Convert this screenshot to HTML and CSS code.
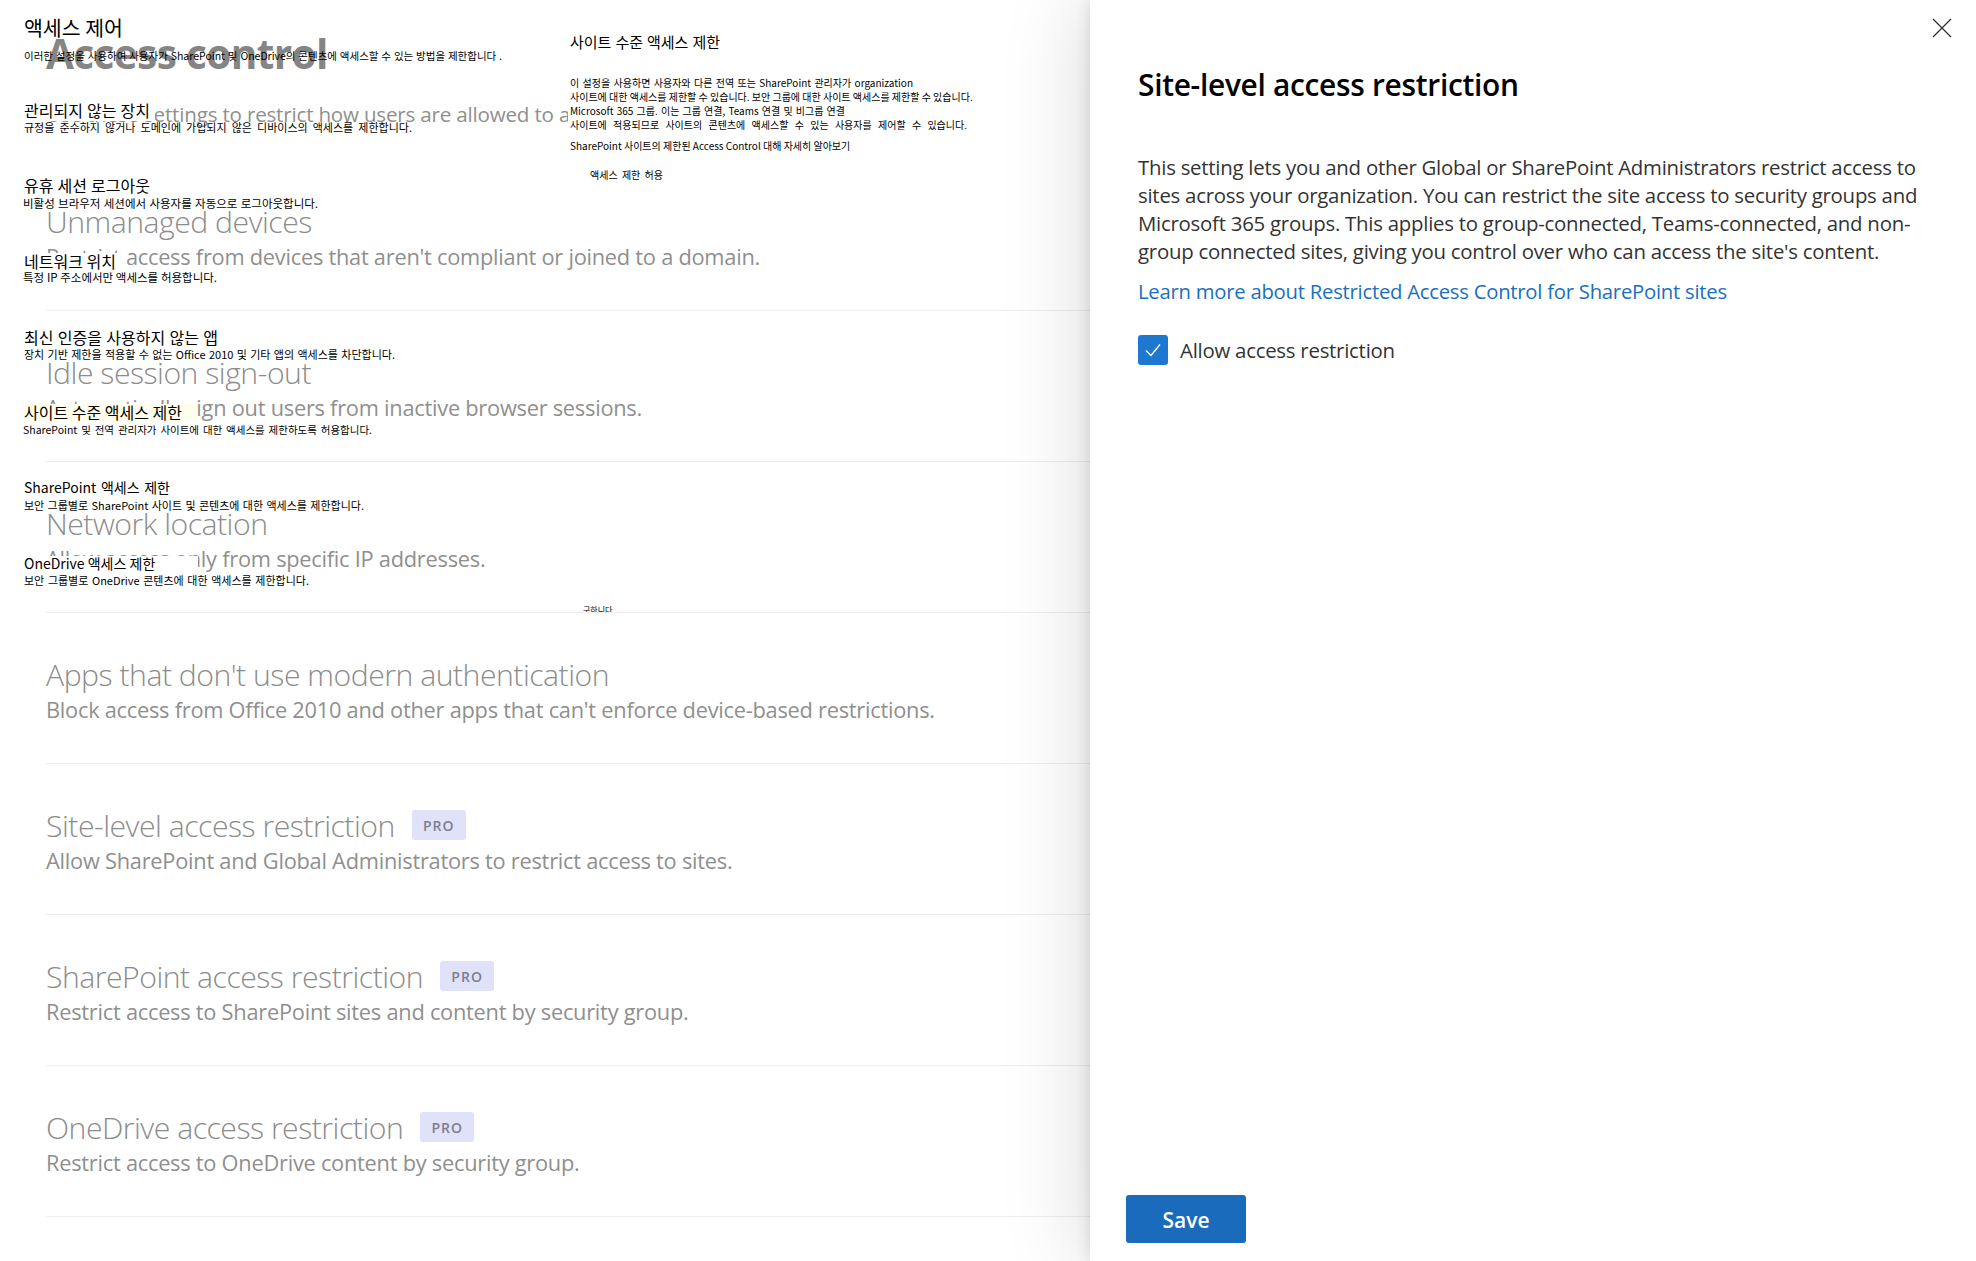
FILE: index.html
```html
<!DOCTYPE html>
<html lang="en">
<head>
<meta charset="utf-8">
<title>Access control</title>
<link rel="stylesheet" href="styles.css">
</head>
<body>
<div class="page">
  <main class="settings">
    <h1 class="page-title">Access control</h1>
    <p class="intro">Use these settings to restrict how users are allowed to access SharePoint and OneDrive content.</p>
    <section class="row">
      <h2 class="row-title">Unmanaged devices</h2>
      <p class="row-desc">Restrict access from devices that aren't compliant or joined to a domain.</p>
    </section>
    <section class="row">
      <h2 class="row-title">Idle session sign-out</h2>
      <p class="row-desc">Automatically sign out users from inactive browser sessions.</p>
    </section>
    <section class="row">
      <h2 class="row-title">Network location</h2>
      <p class="row-desc">Allow access only from specific IP addresses.</p>
    </section>
    <section class="row">
      <h2 class="row-title">Apps that don't use modern authentication</h2>
      <p class="row-desc">Block access from Office 2010 and other apps that can't enforce device-based restrictions.</p>
    </section>
    <section class="row">
      <h2 class="row-title">Site-level access restriction <span class="pro">PRO</span></h2>
      <p class="row-desc">Allow SharePoint and Global Administrators to restrict access to sites.</p>
    </section>
    <section class="row">
      <h2 class="row-title">SharePoint access restriction <span class="pro">PRO</span></h2>
      <p class="row-desc">Restrict access to SharePoint sites and content by security group.</p>
    </section>
    <section class="row">
      <h2 class="row-title">OneDrive access restriction <span class="pro">PRO</span></h2>
      <p class="row-desc">Restrict access to OneDrive content by security group.</p>
    </section>
  </main>

  <div class="ko-layer">
    <div class="patch patch-title"></div>
    <div class="patch patch-side"></div>
    <div class="ko h-main">액세스 제어</div>
    <div class="ko s-main">이러한 설정을 사용하여 사용자가 SharePoint 및 OneDrive의 콘텐츠에 액세스할 수 있는 방법을 제한합니다 .</div>
    <div class="ko h-unmanaged">관리되지 않는 장치</div>
    <div class="ko s-unmanaged">규정을 준수하지 않거나 도메인에 가입되지 않은 디바이스의 액세스를 제한합니다.</div>
    <div class="ko h-idle">유휴 세션 로그아웃</div>
    <div class="ko s-idle">비활성 브라우저 세션에서 사용자를 자동으로 로그아웃합니다.</div>
    <div class="ko h-network">네트워크 위치</div>
    <div class="ko s-network">특정 IP 주소에서만 액세스를 허용합니다.</div>
    <div class="ko h-apps">최신 인증을 사용하지 않는 앱</div>
    <div class="ko s-apps">장치 기반 제한을 적용할 수 없는 Office 2010 및 기타 앱의 액세스를 차단합니다.</div>
    <div class="ko h-site">사이트 수준 액세스 제한</div>
    <div class="ko s-site">SharePoint 및 전역 관리자가 사이트에 대한 액세스를 제한하도록 허용합니다.</div>
    <div class="ko h-sp">SharePoint 액세스 제한</div>
    <div class="ko s-sp">보안 그룹별로 SharePoint 사이트 및 콘텐츠에 대한 액세스를 제한합니다.</div>
    <div class="ko h-od">OneDrive 액세스 제한</div>
    <div class="ko s-od">보안 그룹별로 OneDrive 콘텐츠에 대한 액세스를 제한합니다.</div>
    <div class="ko h-side">사이트 수준 액세스 제한</div>
    <div class="ko l1">이 설정을 사용하면 사용자와 다른 전역 또는 SharePoint 관리자가 organization</div>
    <div class="ko l2">사이트에 대한 액세스를 제한할 수 있습니다. 보안 그룹에 대한 사이트 액세스를 제한할 수 있습니다.</div>
    <div class="ko l3">Microsoft 365 그룹. 이는 그룹 연결, Teams 연결 및 비그룹 연결</div>
    <div class="ko l4">사이트에 적용되므로 사이트의 콘텐츠에 액세스할 수 있는 사용자를 제어할 수 있습니다.</div>
    <div class="ko l5">SharePoint 사이트의 제한된 Access Control 대해 자세히 알아보기</div>
    <div class="ko l6">액세스 제한 허용</div>
    <div class="ko l7">구하니다</div>
  </div>

  <aside class="panel">
    <button class="close" aria-label="Close">
      <svg class="close-icon" viewBox="0 0 20 20"><path d="M1 1 19 19M19 1 1 19"/></svg>
    </button>
    <h2 class="panel-title">Site-level access restriction</h2>
    <p class="panel-text">This setting lets you and other Global or SharePoint Administrators restrict access to sites across your organization. You can restrict the site access to security groups and Microsoft 365 groups. This applies to group-connected, Teams-connected, and non-group connected sites, giving you control over who can access the site's content.</p>
    <a class="panel-link" href="#">Learn more about Restricted Access Control for SharePoint sites</a>
    <label class="check">
      <span class="check-box"><svg class="check-icon" viewBox="0 0 20 20"><path d="M3 10.5 8 15.5 17 4.5"/></svg></span>
      <span>Allow access restriction</span>
    </label>
    <div class="panel-footer"><button class="save">Save</button></div>
  </aside>
</div>
</body>
</html>
```
FILE: styles.css
```css
* { box-sizing: border-box; }
html, body { margin: 0; height: 100%; background: #fff; }
body { font-family: "Open Sans", "Noto Sans", sans-serif; overflow: hidden; }

.page { position: relative; display: flex; width: 1976px; height: 1261px; overflow: hidden; }

.settings { flex: 0 0 1090px; width: 1090px; padding-left: 46px; color: #8c8c8c; overflow: hidden; }
.page-title { margin: 26px 0 0; font-size: 40.5px; line-height: 56px; font-weight: 700; letter-spacing: -0.6px; color: #858585; white-space: nowrap; }
.intro { margin: 17px 0 0; height: 61px; font-size: 20.6px; line-height: 30px; white-space: nowrap; letter-spacing: -0.2px; color: #8f8f8f; }

.row { height: 151px; padding-top: 40px; border-bottom: 1px solid #eeeeee; }
.row-title { display: flex; align-items: center; margin: 0; height: 42px; font-size: 30.2px; font-weight: 300; letter-spacing: -0.5px; color: #8c8c8c; white-space: nowrap; }
.row-desc { margin: 1px 0 0; font-size: 21.8px; line-height: 28px; letter-spacing: -0.25px; color: #8f8f8f; white-space: nowrap; }
.pro { display: flex; align-items: center; justify-content: center; width: 54px; height: 30px; margin-left: 17px; border-radius: 3px; background: #dfe2f8; color: #7c7f92; font-size: 14px; font-weight: 600; letter-spacing: 1px; }

.ko-layer { position: absolute; inset: 0 886px 0 0; }
.patch { position: absolute; background: #fff; }
.patch-title { left: 20px; top: 70px; width: 540px; height: 33px; }
.patch-side { left: 568px; top: 0; width: 522px; height: 200px; }

.ko { position: absolute; color: #000; font-family: "Noto Sans CJK KR", "Liberation Sans", sans-serif; white-space: nowrap; text-align: justify; text-align-last: justify; line-height: 1; }

.h-main { left: 24px; top: 17px; width: 98px; font-size: 20.5px; }
.s-main { left: 24px; top: 51px; width: 478px; font-size: 10.5px; }
.h-unmanaged { left: 24px; top: 102px; width: 131px; padding-right: 5px; height: 19px; font-size: 16px; background: #fff; }
.s-unmanaged { left: 24px; top: 122px; width: 388px; font-size: 11px; }
.h-idle { left: 24px; top: 177px; width: 126px; font-size: 16px; }
.s-idle { left: 23px; top: 198px; width: 295px; font-size: 11.5px; }
.h-network { left: 24px; top: 253px; width: 103px; padding-right: 11px; height: 18px; font-size: 16px; background: #fff; }
.s-network { left: 23px; top: 272px; width: 194px; font-size: 11.5px; }
.h-apps { left: 24px; top: 329px; width: 194px; font-size: 16px; }
.s-apps { left: 24px; top: 349px; width: 371px; font-size: 11px; }
.h-site { left: 24px; top: 404px; width: 173px; padding-right: 16px; height: 17px; font-size: 16px; background: #fffdeb; }
.s-site { left: 23px; top: 425px; width: 349px; font-size: 10.5px; }
.h-sp { left: 24px; top: 480px; width: 146px; font-size: 14px; }
.s-sp { left: 24px; top: 500px; width: 340px; font-size: 11px; }
.h-od { left: 24px; top: 556px; width: 174px; padding-right: 43px; height: 17px; font-size: 14px; background: #fff; }
.s-od { left: 24px; top: 575px; width: 285px; font-size: 11px; }

.h-side { left: 570px; top: 34px; width: 150px; font-size: 15px; }
.l1 { left: 570px; top: 78px; width: 343px; font-size: 10px; }
.l2 { left: 570px; top: 92px; width: 400px; font-size: 10px; }
.l3 { left: 570px; top: 106px; width: 275px; font-size: 10px; }
.l4 { left: 570px; top: 120px; width: 397px; font-size: 10px; }
.l5 { left: 570px; top: 141px; width: 274px; font-size: 10px; }
.l6 { left: 590px; top: 170px; width: 73px; font-size: 10px; }
.l7 { left: 583px; top: 606px; width: 34px; height: 6px; overflow: hidden; font-size: 8px; }

.panel { position: relative; z-index: 1; flex: 0 0 886px; display: flex; flex-direction: column; padding: 62px 48px 18px 48px; background: #fff; color: #333; box-shadow: 0 0 80px rgba(0, 0, 0, 0.17), 0 0 14px rgba(0, 0, 0, 0.12); }
.close { position: absolute; top: 18px; right: 24px; width: 20px; height: 20px; padding: 0; border: 0; background: none; }
.close-icon { display: block; width: 20px; height: 20px; fill: none; stroke: #333; stroke-width: 1.3; }
.panel-title { margin: 0; font-size: 29.9px; line-height: 46px; font-weight: 600; color: #000; letter-spacing: -0.3px; white-space: nowrap; }
.panel-text { margin: 45px 0 0; font-size: 20.4px; line-height: 28px; letter-spacing: -0.25px; color: #333; }
.panel-link { margin-top: 12px; font-size: 20.3px; line-height: 28px; letter-spacing: -0.25px; color: #1a6fc0; text-decoration: none; }
.check { display: flex; align-items: center; gap: 12px; margin-top: 30px; font-size: 20.4px; line-height: 30px; letter-spacing: -0.25px; color: #333; }
.check-box { display: flex; align-items: center; justify-content: center; width: 30px; height: 30px; border-radius: 3px; background: #1e78d2; }
.check-icon { width: 20px; height: 20px; fill: none; stroke: #fff; stroke-width: 1.5; }
.panel-footer { margin-top: auto; margin-left: -12px; }
.save { display: block; width: 120px; height: 48px; border: 0; border-radius: 3px; background: #1a6bbb; color: #fff; font-family: inherit; font-size: 21px; font-weight: 600; padding-top: 2px; }
```
